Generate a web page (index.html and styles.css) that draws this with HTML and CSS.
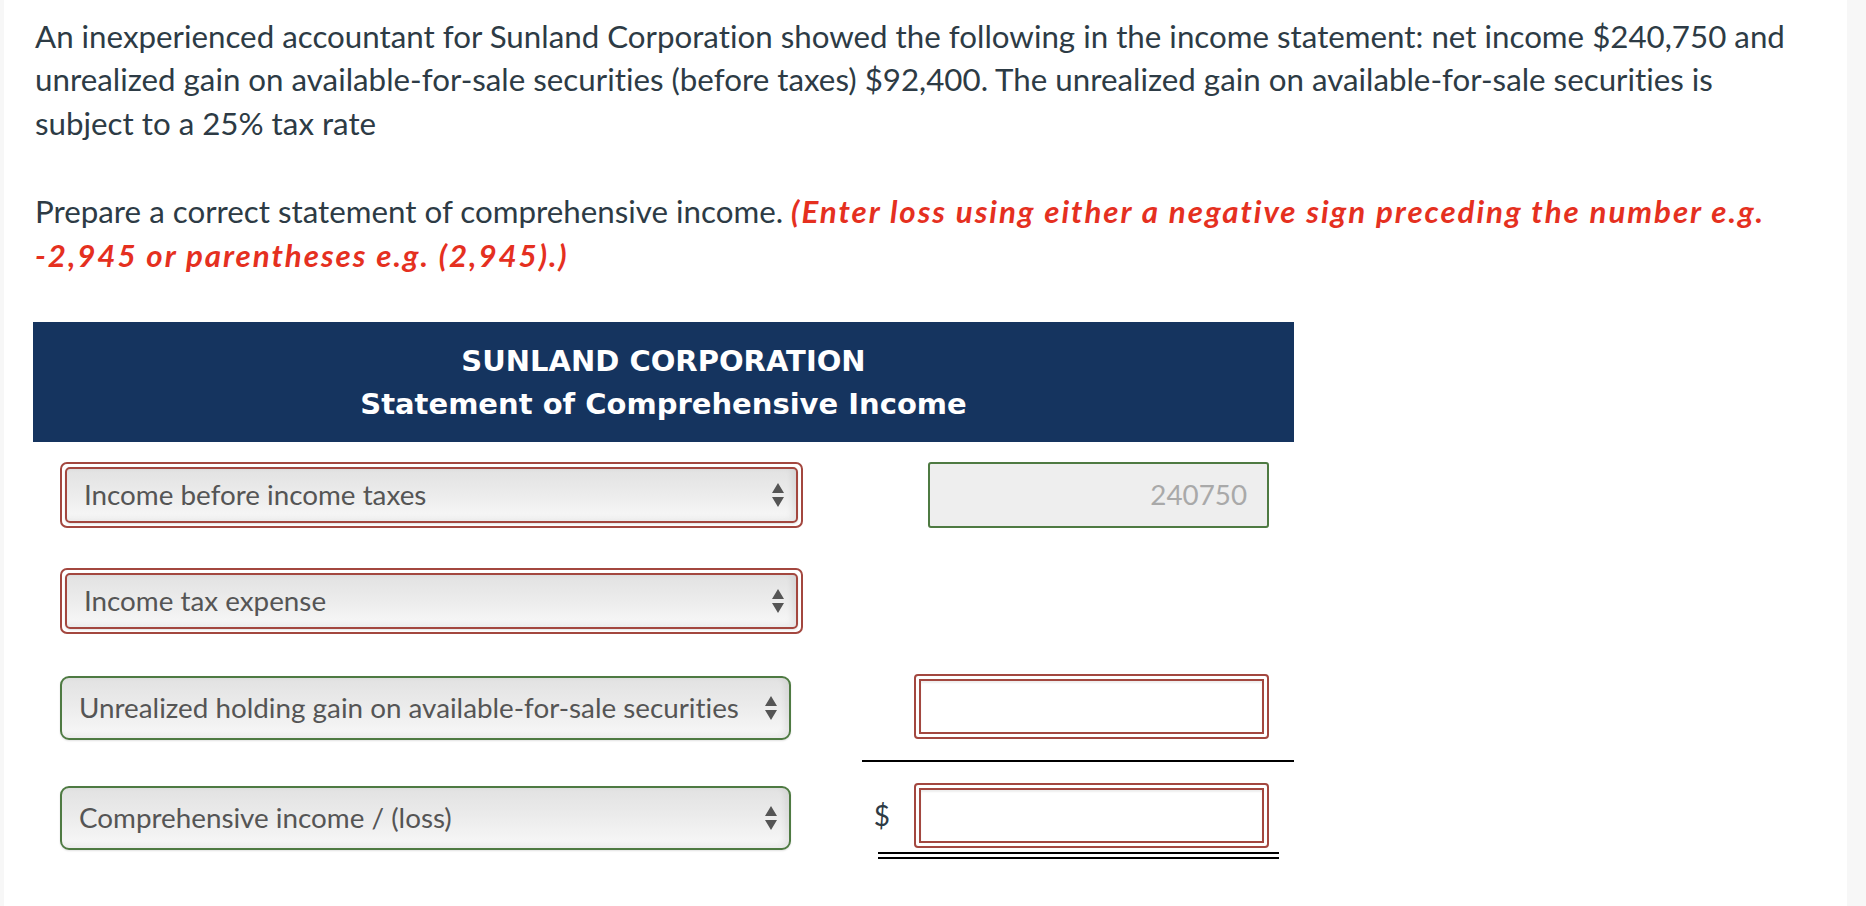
FILE: index.html
```html
<!DOCTYPE html>
<html lang="en">
<head>
<meta charset="utf-8">
<title>Statement of Comprehensive Income</title>
<link rel="stylesheet" href="styles.css">
</head>
<body>
<div class="page">
  <div class="question">
    <p class="q">An inexperienced accountant for Sunland Corporation showed the following in the income statement: net income $240,750 and<br>unrealized gain on available-for-sale securities (before taxes) $92,400. The unrealized gain on available-for-sale securities is<br>subject to a 25% tax rate</p>
    <p class="q last">Prepare a correct statement of comprehensive income. <span class="hint">(Enter loss using either a negative sign preceding the number e.g.<br>-2,945 or parentheses e.g. (2,945).)</span></p>
  </div>

  <div class="stmt">
    <div class="stmt-head">
      <div>SUNLAND CORPORATION</div>
      <div>Statement of Comprehensive Income</div>
    </div>

    <div class="row r1">
      <div class="c-label">
        <div class="wrap-bad">
          <div class="sel bad"><span>Income before income taxes</span>
            <svg class="arr" viewBox="0 0 12 24" width="12" height="24"><path d="M6 0 L12 10 L0 10 Z M0 14 L12 14 L6 24 Z"/></svg>
          </div>
        </div>
      </div>
      <div class="c-amt">
        <div class="inp ok">240750</div>
      </div>
    </div>

    <div class="row r2">
      <div class="c-label">
        <div class="wrap-bad">
          <div class="sel bad"><span>Income tax expense</span>
            <svg class="arr" viewBox="0 0 12 24" width="12" height="24"><path d="M6 0 L12 10 L0 10 Z M0 14 L12 14 L6 24 Z"/></svg>
          </div>
        </div>
      </div>
      <div class="c-amt"></div>
    </div>

    <div class="row r3">
      <div class="c-label">
        <div class="sel good"><span>Unrealized holding gain on available-for-sale securities</span>
          <svg class="arr" viewBox="0 0 12 24" width="12" height="24"><path d="M6 0 L12 10 L0 10 Z M0 14 L12 14 L6 24 Z"/></svg>
        </div>
      </div>
      <div class="c-amt sub">
        <div class="wrap-inp"><div class="inp bad"></div></div>
      </div>
    </div>

    <div class="row r4">
      <div class="c-label">
        <div class="sel good"><span>Comprehensive income / (loss)</span>
          <svg class="arr" viewBox="0 0 12 24" width="12" height="24"><path d="M6 0 L12 10 L0 10 Z M0 14 L12 14 L6 24 Z"/></svg>
        </div>
      </div>
      <div class="c-total">
        <div class="total-line">
          <span class="dollar">$</span>
          <div class="wrap-inp"><div class="inp bad"></div></div>
        </div>
        <div class="dbl"></div>
      </div>
    </div>
  </div>
</div>
</body>
</html>
```

FILE: styles.css
```css
html, body {
  margin: 0;
  padding: 0;
}

body {
  background: #f7f7f7;
  font-family: Lato, "Noto Sans", sans-serif;
  font-variant-ligatures: none;
}

.page {
  margin: 0 19px 0 4px;
  min-height: 906px;
  box-sizing: border-box;
  background: #ffffff;
  padding: 15px 0 0 29px;
}

.question {
  padding-left: 2px;
}

.q {
  margin: 0 0 45.5px;
  font-size: 31.3px;
  line-height: 43.3px;
  color: #2d3b45;
}

.q.last {
  margin-bottom: 0;
}

.hint {
  color: #e5301f;
  font-weight: bold;
  font-style: italic;
  letter-spacing: 1.95px;
}

.stmt {
  width: 1261px;
  margin-top: 45px;
}

.stmt-head {
  background: #15345f;
  color: #ffffff;
  text-align: center;
  font-family: "DejaVu Sans", Verdana, sans-serif;
  font-weight: bold;
  font-size: 29px;
  line-height: 43px;
  padding: 18px 0 16px;
}

.row {
  display: grid;
  grid-template-columns: 829px 432px;
  align-items: start;
}

.r1 { margin-top: 20px; }
.r2 { margin-top: 40px; }
.r3 { margin-top: 40px; }
.r4 { margin-top: 21px; }

.c-label {
  padding-left: 27px;
}

.r3 .c-label { padding-top: 2px; }
.r4 .c-label { padding-top: 3px; }

.c-amt {
  display: flex;
  justify-content: flex-end;
  padding-right: 25px;
}

.c-amt.sub {
  padding-bottom: 21px;
  border-bottom: 2px solid #000000;
}

.total-line {
  display: flex;
  justify-content: flex-end;
  align-items: center;
  padding-right: 25px;
}

.dollar {
  font-size: 28px;
  color: #2d3b45;
  margin-right: 24px;
}

.dbl {
  margin: 4px 15px 0 16px;
  height: 3px;
  border-top: 2px solid #000000;
  border-bottom: 2px solid #000000;
}

.wrap-bad {
  width: 743px;
  box-sizing: border-box;
  border: 2px solid #a3473f;
  border-radius: 7px;
  padding: 3px;
}

.sel {
  box-sizing: border-box;
  height: 56px;
  border: 2px solid #a3473f;
  border-radius: 5px;
  display: flex;
  align-items: center;
  justify-content: space-between;
  padding: 0 12px 0 17px;
  font-size: 27.8px;
  color: #555555;
  background: linear-gradient(to bottom, #e2e2e2 0%, #ebebeb 45%, #f8f8f8 100%);
  box-shadow: inset -4px -2px 6px rgba(0, 0, 0, 0.07), 0 1px 2px rgba(0, 0, 0, 0.12);
  white-space: nowrap;
}

.sel.good {
  width: 731px;
  height: 64px;
  border-color: #4e7a42;
  border-radius: 9px;
}

.arr {
  fill: #555555;
  flex: none;
}

.inp {
  box-sizing: border-box;
}

.inp.ok {
  width: 341px;
  height: 66px;
  border: 2px solid #4e7a42;
  border-radius: 3px;
  background: #eeeeee;
  color: #a9a9a9;
  font-size: 27.8px;
  display: flex;
  align-items: center;
  justify-content: flex-end;
  padding-right: 20px;
}

.wrap-inp {
  width: 355px;
  box-sizing: border-box;
  border: 2px solid #a3473f;
  border-radius: 4px;
  padding: 3px;
}

.inp.bad {
  height: 55px;
  border: 2px solid #a3473f;
  background: #ffffff;
  box-shadow: inset 0 2px 2px rgba(0, 0, 0, 0.07);
}
```
